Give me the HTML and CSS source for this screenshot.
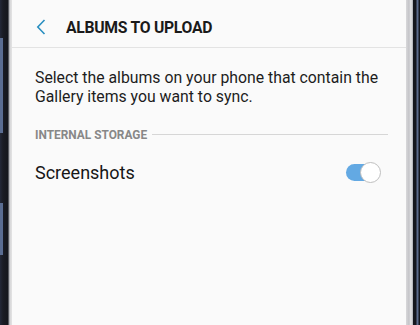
FILE: index.html
```html
<!DOCTYPE html>
<html>
<head>
<meta charset="utf-8">
<link rel="stylesheet" href="styles.css">
</head>
<body>
<div class="phone">
  <div class="bezel-left"><div class="btn btn-a"></div><div class="btn btn-b"></div></div>
  <div class="screen">
    <header class="appbar">
      <svg class="back" width="10" height="16" viewBox="0 0 10 16"><path d="M8.5 1 L1.8 8 L8.5 15" fill="none" stroke="#2a8fc0" stroke-width="1.6"/></svg>
      <h1 class="title">ALBUMS TO UPLOAD</h1>
    </header>
    <div class="content">
      <p class="desc">Select the albums on your phone that contain the Gallery items you want to sync.</p>
      <div class="section">
        <span class="section-label">INTERNAL STORAGE</span>
        <span class="section-rule"></span>
      </div>
      <div class="row">
        <span class="row-label">Screenshots</span>
        <span class="switch"><span class="knob"></span></span>
      </div>
    </div>
  </div>
  <div class="bezel-right"><div class="edge"></div><div class="frame"></div></div>
</div>
</body>
</html>
```
FILE: styles.css
```css
html, body {
  margin: 0;
  padding: 0;
  width: 420px;
  height: 325px;
  overflow: hidden;
  background: #1b1e27;
}
.phone {
  display: flex;
  width: 420px;
  height: 325px;
}
.bezel-left {
  position: relative;
  width: 12px;
  flex: none;
  background: linear-gradient(to right, #232838 0, #1a1c24 3px, #14161c 8px, #9a9ca2 9px, #d6d6d8 10px, #e4e4e4 12px);
}
.btn {
  position: absolute;
  left: 0;
  width: 3px;
  background: #5a6d92;
}
.btn-a { top: 38px; height: 95px; }
.btn-b { top: 203px; height: 52px; }
.screen {
  flex: none;
  width: 394px;
  background: #fafafa;
  font-family: Roboto, "Noto Sans", sans-serif;
}
.appbar {
  display: flex;
  align-items: center;
  height: 48px;
  padding-top: 6px;
  border-bottom: 1px solid #e3e3e3;
  box-sizing: border-box;
}
.back {
  margin-left: 24px;
}
.title {
  margin: 0 0 0 20px;
  font-size: 17px;
  font-weight: 700;
  color: #1a1a1a;
  letter-spacing: -0.3px;
  transform: scaleX(0.925);
  transform-origin: left center;
  white-space: nowrap;
}
.content {
  padding: 20px 18px 0 23px;
}
.desc {
  margin: 0;
  font-size: 15.8px;
  line-height: 19px;
  color: #1d1d1d;
}
.section {
  display: flex;
  align-items: center;
  margin-top: 21px;
}
.section-label {
  font-size: 12.5px;
  font-weight: 700;
  color: #888;
  transform: scaleX(0.95);
  transform-origin: left center;
  white-space: nowrap;
  margin-right: -1px;
}
.section-rule {
  flex: 1;
  height: 1px;
  background: #d6d6d6;
}
.row {
  display: flex;
  align-items: center;
  justify-content: space-between;
  margin-top: 20px;
  padding-right: 8px;
}
.row-label {
  font-size: 18px;
  color: #161616;
}
.switch {
  position: relative;
  width: 34px;
  height: 17px;
  border-radius: 9px;
  background: #63a9e3;
}
.knob {
  position: absolute;
  right: -1px;
  top: -2px;
  width: 19px;
  height: 19px;
  border-radius: 50%;
  background: #fff;
  border: 1px solid #bfbfbf;
}
.bezel-right {
  position: relative;
  flex: 1;
  display: flex;
}
.edge {
  width: 7px;
  background: linear-gradient(to right, #d8d8da 0, #c4c4c8 3px, #e6e6e8 5px, #a8aab0 7px);
}
.frame {
  flex: 1;
  background: linear-gradient(to right, #15171e 0, #15171e 3px, #5b6b8c 4px, #5b6b8c 5px, #15171e 6px);
}
```
